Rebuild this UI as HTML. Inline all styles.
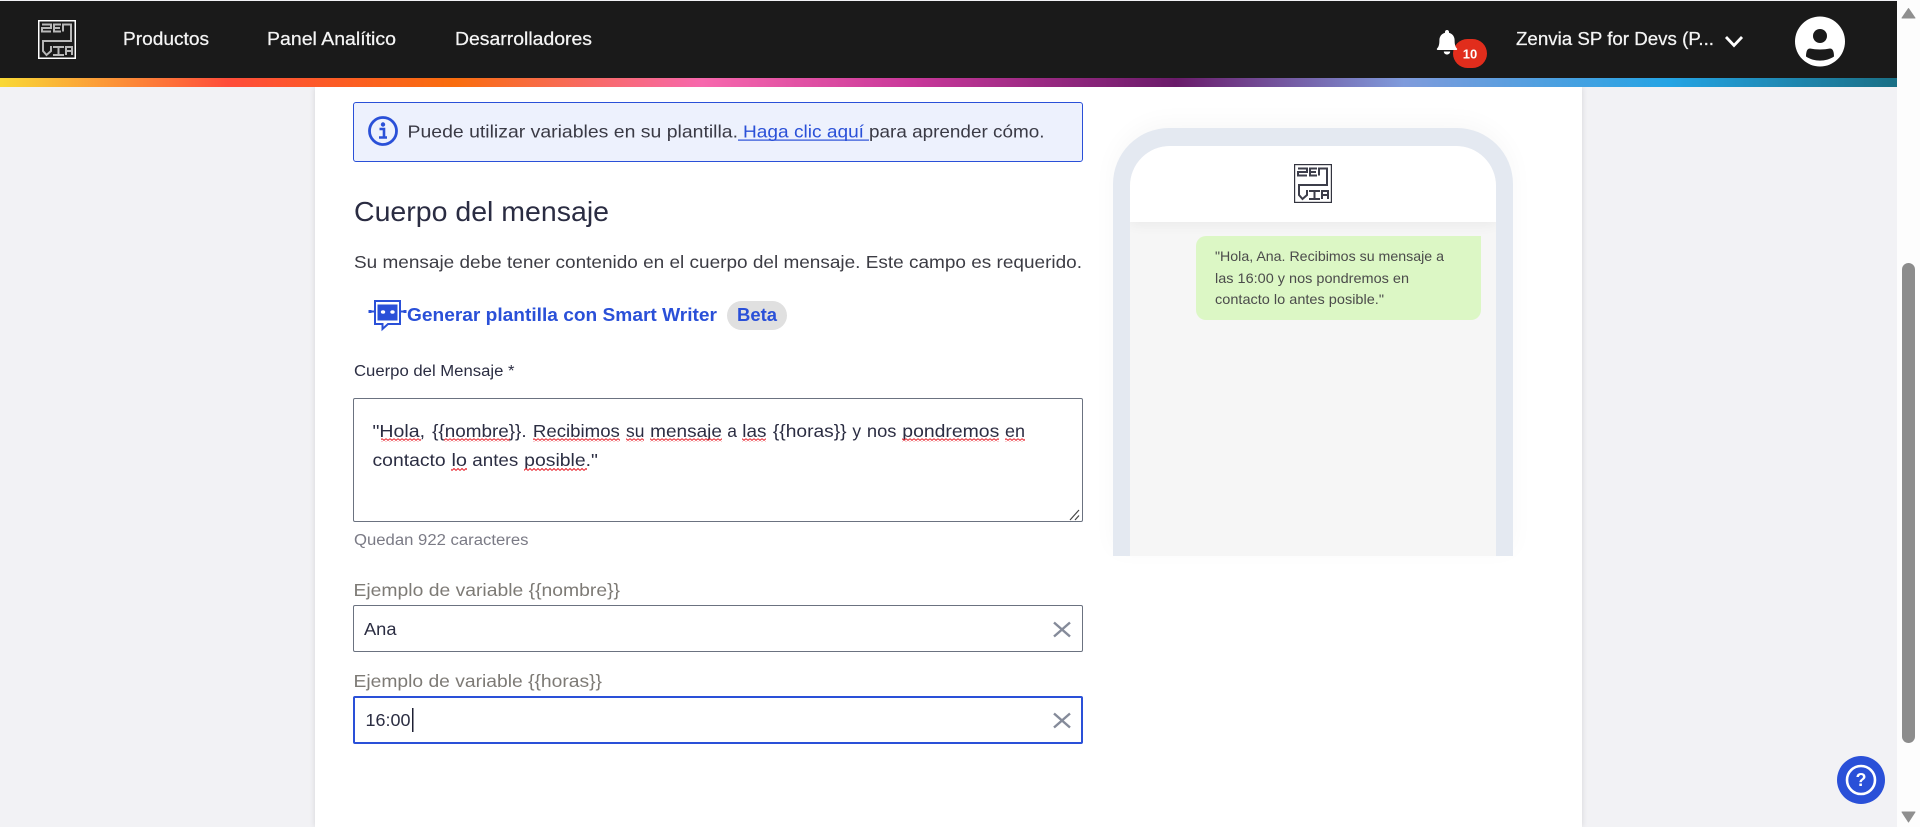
<!DOCTYPE html>
<html lang="es">
<head>
<meta charset="utf-8">
<title>Cuerpo del mensaje</title>
<style>
html,body{margin:0;padding:0;width:1920px;height:827px;overflow:hidden;background:#f2f2f5;font-family:"Liberation Sans",sans-serif}
.abs{position:absolute;box-sizing:border-box}
#scroll{left:1897px;top:0;width:23px;height:827px;background:#fdfdfd}
#header{left:0;top:1px;width:1897px;height:77px;background:#1a1a1a}
#rainbow{left:0;top:78px;width:1897px;height:9px;background:linear-gradient(90deg,#f9d936 0%,#ff4d3a 12%,#f96d0e 24%,#f768ad 37%,#c9389a 48%,#6a1b6a 62%,#7f9bdc 74%,#24a4e4 88%,#1a6f85 100%)}
#card{left:315px;top:87px;width:1267px;height:740px;background:#fff;box-shadow:0 0 6px rgba(0,0,0,.12)}
#info{left:353px;top:102px;width:730px;height:60px;background:#edf1fd;border:1px solid #2a50d8;border-radius:3px}
#area{left:353px;top:398px;width:730px;height:124px;background:#fff;border:1px solid #6b7280;border-radius:2px}
#in1{left:353px;top:605px;width:730px;height:47px;background:#fff;border:1px solid #6b7280;border-radius:2px}
#in2{left:353px;top:696px;width:730px;height:48px;background:#fff;border:2px solid #2a50d8;border-radius:2px}
#phone{left:1113px;top:128px;width:400px;height:428px;background:#e4e9f1;border-radius:56px 56px 0 0;box-shadow:0 -6px 24px rgba(0,0,0,.03)}
#screen{left:1130px;top:146px;width:366px;height:410px;background:#f6f6f6;border-radius:40px 40px 0 0;overflow:hidden}
#phead{left:0;top:0;width:366px;height:76px;background:#fff;box-shadow:0 3px 12px rgba(0,0,0,.05)}
#bubble{left:1196px;top:236px;width:285px;height:84px;background:#dcf7c5;border-radius:10px 0 10px 10px}
#beta{left:727px;top:301px;width:60px;height:29px;background:#e0e0e0;border-radius:15px}
#badge{left:1453px;top:39px;width:34px;height:29px;background:#e12d1c;border-radius:15px}
#help{left:1837px;top:756px;width:48px;height:48px;background:#2a50d8;border-radius:50%}
#thumb{left:1902px;top:263px;width:13px;height:480px;background:#8c8c8c;border-radius:7px}
svg#o{position:absolute;left:0;top:0}
text{font-family:"Liberation Sans",sans-serif;white-space:pre}
</style>
</head>
<body>
<div class="abs" id="scroll"></div>
<div class="abs" id="thumb"></div>
<div class="abs" id="card"></div>
<div class="abs" id="header"></div>
<div class="abs" id="rainbow"></div>
<div class="abs" id="info"></div>
<div class="abs" id="area"></div>
<div class="abs" id="in1"></div>
<div class="abs" id="in2"></div>
<div class="abs" id="phone"></div>
<div class="abs" id="screen"><div class="abs" id="phead"></div></div>
<div class="abs" id="bubble"></div>
<div class="abs" id="beta"></div>
<div class="abs" id="badge"></div>
<div class="abs" id="help"></div>
<svg id="o" width="1920" height="827" viewBox="0 0 1920 827" xmlns="http://www.w3.org/2000/svg">
<defs>
<g id="logopaths" fill="none" stroke-width="2">
<path d="M4 4.5H13V8H4V11.5H13"/>
<path d="M23 4.5H16V11.5H23M16 8H22"/>
<path d="M25 11.5V4.5H33V21H5V31L8.5 35L13 31V26"/>
<path d="M15 27H26M15 35H26M20.5 27V35"/>
<path d="M28 35V27H34V35M28 31H34"/>
</g>
<pattern id="sq" width="4" height="3" patternUnits="userSpaceOnUse">
<path d="M0 2.5L2 .5L4 2.5" fill="none" stroke="#e8202a" stroke-width="1"/>
</pattern>
</defs>

<!-- header -->
<g transform="translate(38 20)">
<rect x=".75" y=".75" width="36.5" height="37.5" fill="none" stroke="#fff" stroke-width="1.5"/>
<use href="#logopaths" stroke="#b8b8b8"/>
</g>
<g fill="#f4f4f4" stroke="#f4f4f4" stroke-width=".25" font-size="18.5">
<text x="123" y="45" textLength="86" lengthAdjust="spacingAndGlyphs">Productos</text>
<text x="267" y="45" textLength="129" lengthAdjust="spacingAndGlyphs">Panel Analítico</text>
<text x="455" y="45" textLength="137" lengthAdjust="spacingAndGlyphs">Desarrolladores</text>
<text x="1516" y="45" textLength="198" lengthAdjust="spacingAndGlyphs">Zenvia SP for Devs (P...</text>
</g>
<path d="M1726 37L1734 45.500L1742 37" fill="none" stroke="#fff" stroke-width="2.800"/>
<!-- bell -->
<path d="M1447 30c1.3 0 2 .9 2 2v.8c3.6 1 5.6 4 5.6 7.4 0 5 1 6.8 2.4 8.3.4.5.2 1.5-.8 1.5h-18.400c-1 0-1.200-1-.8-1.500 1.400-1.500 2.400-3.300 2.400-8.300 0-3.400 2-6.400 5.600-7.400V32c0-1.100.7-2 2-2zM1443.800 51.500h6.400c0 1.800-1.400 3-3.200 3s-3.200-1.200-3.200-3z" fill="#fff"/>
<text x="1470" y="58.500" font-size="13" font-weight="700" fill="#fff" text-anchor="middle">10</text>
<!-- avatar -->
<circle cx="1820" cy="41.500" r="25" fill="#fff"/>
<circle cx="1820" cy="36" r="7" fill="#1a1a1a"/>
<path d="M1810 48.500C1816 49.800 1824 49.800 1830 48.500C1832 48.500 1833 50 1833.500 52C1834 54 1834 56 1834 56.500C1826 62 1814 62 1806 56.500C1806 56 1806 54 1806.500 52C1807 50 1808 48.500 1810 48.500Z" fill="#1a1a1a"/>

<!-- info banner -->
<circle cx="383" cy="131" r="13.500" fill="none" stroke="#2a50d8" stroke-width="2.800"/>
<circle cx="383" cy="124.500" r="2.200" fill="#2a50d8"/>
<path d="M379.500 129H384V137M379 137.500H387" fill="none" stroke="#2a50d8" stroke-width="2.600"/>
<text x="407.500" y="137.500" font-size="17.500" fill="#3a3a45" textLength="330.500" lengthAdjust="spacingAndGlyphs">Puede utilizar variables en su plantilla.</text>
<text x="743" y="137.500" font-size="17.500" fill="#2a50d8" textLength="121" lengthAdjust="spacingAndGlyphs">Haga clic aquí</text>
<rect x="738" y="139.500" width="131" height="1.200" fill="#2a50d8"/>
<text x="869" y="137.500" font-size="17.500" fill="#3a3a45" textLength="175.500" lengthAdjust="spacingAndGlyphs">para aprender cómo.</text>

<!-- heading -->
<text x="354" y="221" font-size="27.500" fill="#2a2c42" textLength="255" lengthAdjust="spacingAndGlyphs">Cuerpo del mensaje</text>
<text x="354" y="268" font-size="17.500" fill="#3c3c44" textLength="728" lengthAdjust="spacingAndGlyphs">Su mensaje debe tener contenido en el cuerpo del mensaje. Este campo es requerido.</text>

<!-- smart writer -->
<path d="M375 301H400V324H388L382.500 329V324H375Z" fill="#fff" stroke="#2a50d8" stroke-width="2"/>
<rect x="377.500" y="304.500" width="20" height="16" fill="#2a50d8"/>
<ellipse cx="383" cy="312" rx="2.200" ry="1.800" fill="#fff"/>
<ellipse cx="392.500" cy="312" rx="2.200" ry="1.800" fill="#fff"/>
<path d="M370 311.500H374M401 311.500H405" stroke="#2a50d8" stroke-width="2"/>
<rect x="368.500" y="310" width="3" height="3" fill="#2a50d8"/>
<rect x="403.500" y="310" width="3" height="3" fill="#2a50d8"/>
<text x="407" y="321" font-size="18" font-weight="700" fill="#2a50d8" textLength="310" lengthAdjust="spacingAndGlyphs">Generar plantilla con Smart Writer</text>
<text x="737" y="321" font-size="18" font-weight="700" fill="#2a50d8" textLength="40" lengthAdjust="spacingAndGlyphs">Beta</text>

<!-- textarea -->
<text x="354" y="376" font-size="15.500" fill="#2b2d42" textLength="160.500" lengthAdjust="spacingAndGlyphs">Cuerpo del Mensaje *</text>
<g font-size="17.500" fill="#2b2d42">
<text x="372.500" y="437" textLength="52.500" lengthAdjust="spacingAndGlyphs">"Hola,</text>
<text x="432.100" y="437" textLength="94.500" lengthAdjust="spacingAndGlyphs">{{nombre}}.</text>
<text x="532.900" y="437" textLength="87" lengthAdjust="spacingAndGlyphs">Recibimos</text>
<text x="626" y="437" textLength="18.400" lengthAdjust="spacingAndGlyphs">su</text>
<text x="650.200" y="437" textLength="71.700" lengthAdjust="spacingAndGlyphs">mensaje</text>
<text x="727.300" y="437" textLength="9.700" lengthAdjust="spacingAndGlyphs">a</text>
<text x="742.300" y="437" textLength="24.200" lengthAdjust="spacingAndGlyphs">las</text>
<text x="772.900" y="437" textLength="73.700" lengthAdjust="spacingAndGlyphs">{{horas}}</text>
<text x="852.400" y="437" textLength="8.700" lengthAdjust="spacingAndGlyphs">y</text>
<text x="866.900" y="437" textLength="29.600" lengthAdjust="spacingAndGlyphs">nos</text>
<text x="902.300" y="437" textLength="97" lengthAdjust="spacingAndGlyphs">pondremos</text>
<text x="1005" y="437" textLength="20" lengthAdjust="spacingAndGlyphs">en</text>
<text x="372.500" y="466" textLength="73.200" lengthAdjust="spacingAndGlyphs">contacto</text>
<text x="451.500" y="466" textLength="15.500" lengthAdjust="spacingAndGlyphs">lo</text>
<text x="472.300" y="466" textLength="46" lengthAdjust="spacingAndGlyphs">antes</text>
<text x="524.200" y="466" textLength="73.700" lengthAdjust="spacingAndGlyphs">posible."</text>
</g>
<g fill="url(#sq)">
<rect x="381" y="438.500" width="40" height="3"/>
<rect x="444" y="438.500" width="66" height="3"/>
<rect x="533" y="438.500" width="87" height="3"/>
<rect x="626" y="438.500" width="18" height="3"/>
<rect x="650" y="438.500" width="72" height="3"/>
<rect x="742" y="438.500" width="24" height="3"/>
<rect x="902" y="438.500" width="97" height="3"/>
<rect x="1005" y="438.500" width="20" height="3"/>
<rect x="451" y="468" width="16" height="3"/>
<rect x="524" y="468" width="63" height="3"/>
</g>
<path d="M1070 520L1079 510M1075 520L1079 515.500" stroke="#444" stroke-width="1.200" fill="none"/>
<text x="354" y="545" font-size="15.500" fill="#7a7a85" textLength="174.500" lengthAdjust="spacingAndGlyphs">Quedan 922 caracteres</text>

<!-- variable inputs -->
<text x="353.500" y="596" font-size="17.500" fill="#7d7a75" textLength="266.500" lengthAdjust="spacingAndGlyphs">Ejemplo de variable {{nombre}}</text>
<text x="364" y="635" font-size="17.500" fill="#2b2d42" textLength="32.500" lengthAdjust="spacingAndGlyphs">Ana</text>
<path d="M1054 622.500L1070 636.500M1070 622.500L1054 636.500" stroke="#858b9a" stroke-width="2.400" fill="none"/>
<text x="353.500" y="687" font-size="17.500" fill="#7d7a75" textLength="248.500" lengthAdjust="spacingAndGlyphs">Ejemplo de variable {{horas}}</text>
<text x="365.500" y="726" font-size="17.500" fill="#2b2d42" textLength="45" lengthAdjust="spacingAndGlyphs">16:00</text>
<rect x="412" y="708" width="1.500" height="24" fill="#1d1f33"/>
<path d="M1054 713.500L1070 727.500M1070 713.500L1054 727.500" stroke="#858b9a" stroke-width="2.400" fill="none"/>

<!-- phone -->
<g transform="translate(1294 164)">
<rect x=".6" y=".6" width="36.800" height="37.800" fill="none" stroke="#33343f" stroke-width="1.200"/>
<use href="#logopaths" stroke="#3c3d4a"/>
</g>
<g font-size="13.800" fill="#4b4b4b">
<text x="1215" y="261" textLength="229" lengthAdjust="spacingAndGlyphs">"Hola, Ana. Recibimos su mensaje a</text>
<text x="1215" y="283" textLength="194" lengthAdjust="spacingAndGlyphs">las 16:00 y nos pondremos en</text>
<text x="1215" y="304" textLength="169" lengthAdjust="spacingAndGlyphs">contacto lo antes posible."</text>
</g>

<!-- help -->
<circle cx="1861" cy="780" r="14" fill="none" stroke="#fff" stroke-width="2.600"/>
<text x="1861" y="786" font-size="18" font-weight="700" fill="#fff" text-anchor="middle">?</text>

<!-- scrollbar arrows -->
<path d="M1908.500 8.500L1915 18H1902Z" fill="#8f8f8f" stroke="#8f8f8f" stroke-linejoin="round"/>
<path d="M1902 812H1915L1908.500 822Z" fill="#8f8f8f" stroke="#8f8f8f" stroke-linejoin="round"/>
</svg>
</body>
</html>
